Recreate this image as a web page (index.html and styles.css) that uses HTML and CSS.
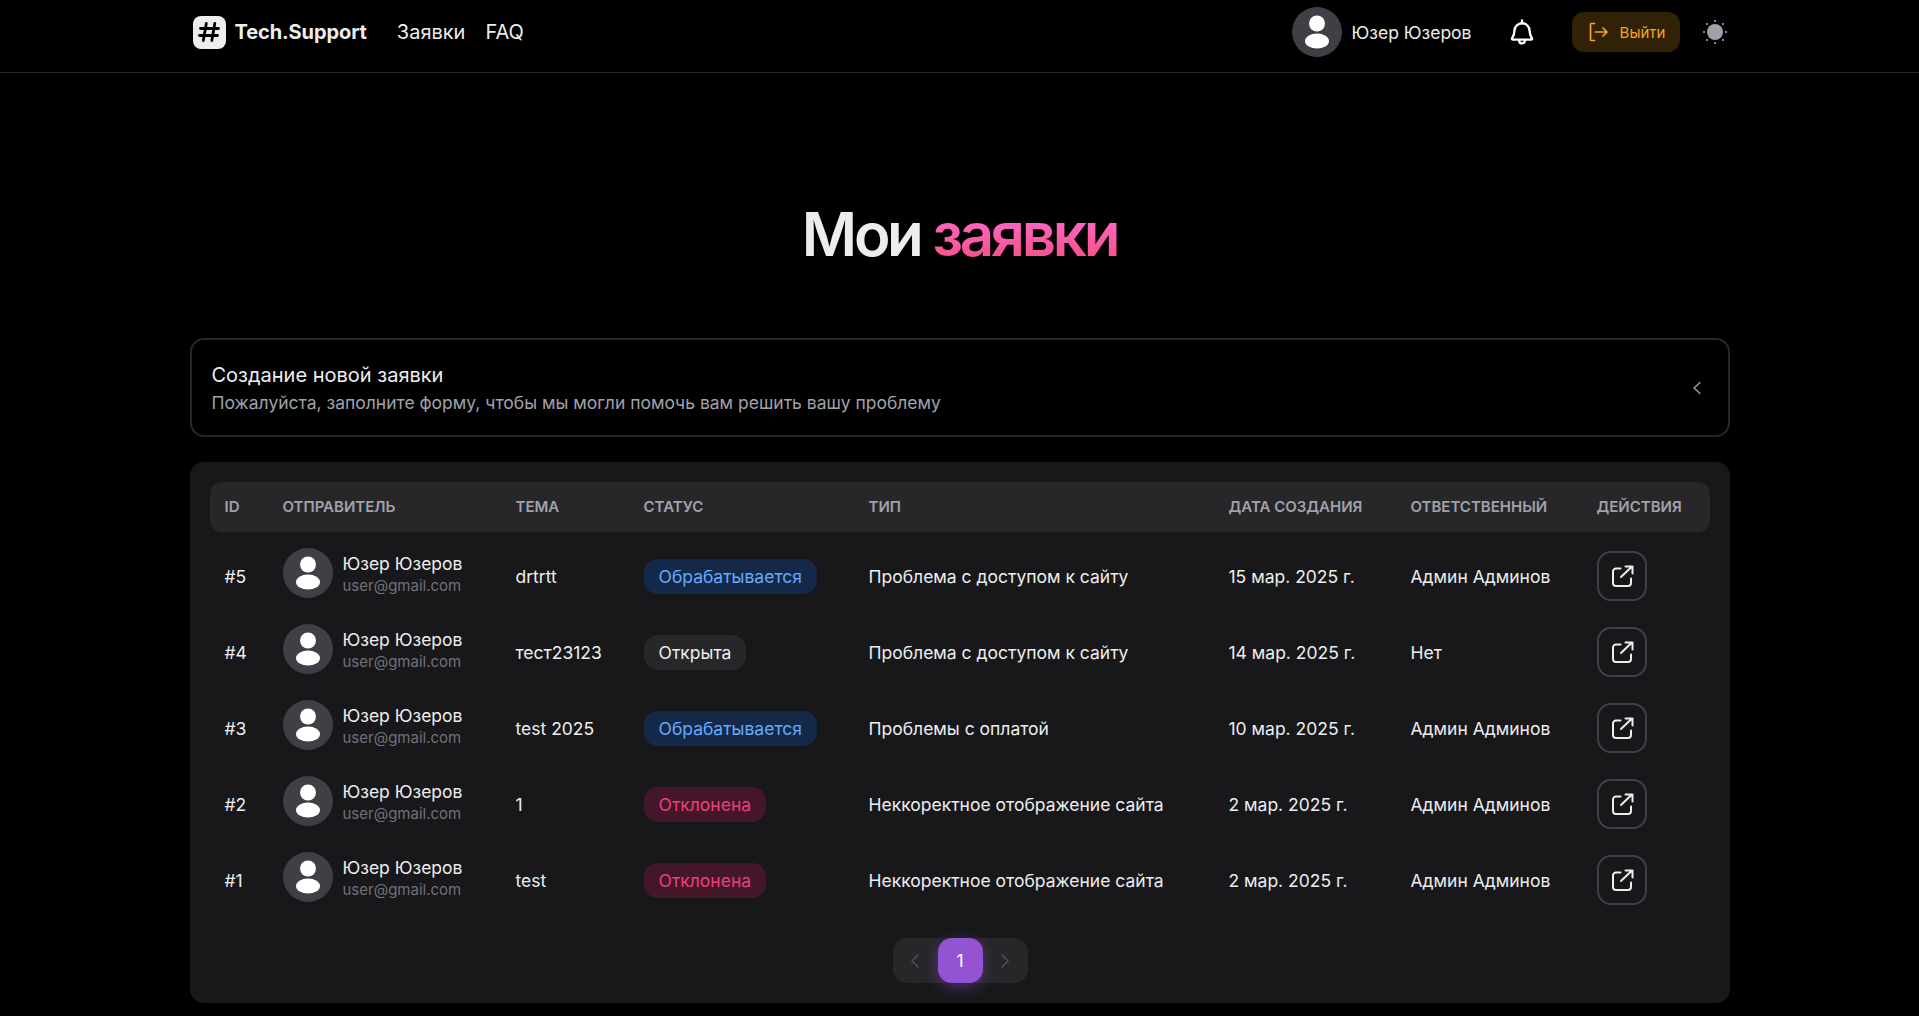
FILE: index.html
```html
<!DOCTYPE html>
<html lang="ru">
<head>
<meta charset="utf-8">
<title>Tech.Support</title>
<link rel="stylesheet" href="styles.css">
</head>
<body>
<svg class="defs" width="0" height="0" aria-hidden="true">
  <symbol id="person" viewBox="0 0 50 50">
    <circle cx="25" cy="16.500" r="8" fill="#fff"/>
    <ellipse cx="25" cy="34" rx="12" ry="7.500" fill="#fff"/>
  </symbol>
  <symbol id="open" viewBox="0 0 24 24">
    <path d="M10.500 4.500H6a3 3 0 0 0-3 3V19a3 3 0 0 0 3 3h12a3 3 0 0 0 3-3v-4.500" fill="none" stroke="currentColor" stroke-width="2" stroke-linecap="round" stroke-linejoin="round"/>
    <path d="M11 13 22 2.500M15.500 2.500H22.500V9.500" fill="none" stroke="currentColor" stroke-width="2" stroke-linecap="round" stroke-linejoin="round"/>
  </symbol>
</svg>
<header class="navbar">
  <div class="nav-inner">
    <div class="brand">
      <span class="logo">
        <svg width="24" height="24" viewBox="0 0 24 24"><path d="M9.300 3.500 6.300 20.500M17.800 3.500l-3 17M3.500 8.500h18M2.500 15.500h18" fill="none" stroke="#000" stroke-width="2.800" stroke-linecap="round"/></svg>
      </span>
      <span class="brand-name">Tech.Support</span>
    </div>
    <nav class="nav-links"><a>Заявки</a><a>FAQ</a></nav>
    <div class="nav-right">
      <div class="nav-user">
        <span class="avatar"><svg width="50" height="50"><use href="#person"/></svg></span>
        <span>Юзер Юзеров</span>
      </div>
      <svg class="bell" width="28" height="28" viewBox="0 0 24 24" fill="none" stroke="#fff" stroke-width="2" stroke-linecap="round" stroke-linejoin="round"><path d="M12 4.500a6.500 6.500 0 0 0-6.500 6.500c0 3.500-1 5-2 6.500-.3.500 0 1 .6 1h15.800c.6 0 .9-.5.6-1-1-1.500-2-3-2-6.500A6.500 6.500 0 0 0 12 4.500Z"/><path d="M12 2v2.500M9.500 19c0 1.600 1.100 2.800 2.500 2.800s2.500-1.200 2.500-2.800"/></svg>
      <button class="logout">
        <svg width="22" height="22" viewBox="0 0 22 22" fill="none" stroke="currentColor" stroke-width="1.700" stroke-linecap="round" stroke-linejoin="round"><path d="M7.500 2.500H4.500a1 1 0 0 0-1 1v15a1 1 0 0 0 1 1h3M8.500 11h11.500M16 7l4 4-4 4"/></svg>
        <span>Выйти</span>
      </button>
      <svg class="sun" width="26" height="26" viewBox="0 0 26 26"><circle cx="13" cy="13" r="8" fill="#a1a1aa"/><g fill="#a1a1aa"><circle cx="13" cy="2" r="1.100"/><circle cx="13" cy="24" r="1.100"/><circle cx="2" cy="13" r="1.100"/><circle cx="24" cy="13" r="1.100"/><circle cx="5" cy="5" r="1.100"/><circle cx="21" cy="5" r="1.100"/><circle cx="5" cy="21" r="1.100"/><circle cx="21" cy="21" r="1.100"/></g></svg>
    </div>
  </div>
</header>
<main class="page">
  <h1 class="title">Мои <span class="accent">заявки</span></h1>
  <section class="create">
    <div>
      <div class="create-title">Создание новой заявки</div>
      <div class="create-sub">Пожалуйста, заполните форму, чтобы мы могли помочь вам решить вашу проблему</div>
    </div>
    <svg class="create-chevron" width="12" height="16" viewBox="0 0 12 16" fill="none" stroke="#a1a1aa" stroke-width="1.400" stroke-linecap="round" stroke-linejoin="round"><path d="M9 2.500 3 8l6 5.500"/></svg>
  </section>
  <section class="panel">
    <table class="tickets">
      <colgroup>
        <col class="c-id"><col class="c-from"><col class="c-topic"><col class="c-status"><col class="c-type"><col class="c-date"><col class="c-resp"><col class="c-act">
      </colgroup>
      <thead>
        <tr><th>ID</th><th>Отправитель</th><th>Тема</th><th>Статус</th><th>Тип</th><th>Дата создания</th><th>Ответственный</th><th>Действия</th></tr>
      </thead>
      <tbody>
        <tr>
          <td>#5</td>
          <td><div class="sender"><span class="avatar"><svg width="50" height="50"><use href="#person"/></svg></span><div><div class="s-name">Юзер Юзеров</div><div class="s-mail">user@gmail.com</div></div></div></td>
          <td>drtrtt</td>
          <td><span class="chip chip-blue">Обрабатывается</span></td>
          <td>Проблема с доступом к сайту</td>
          <td>15 мар. 2025 г.</td>
          <td>Админ Админов</td>
          <td><span class="act"><svg width="24" height="24"><use href="#open"/></svg></span></td>
        </tr>
        <tr>
          <td>#4</td>
          <td><div class="sender"><span class="avatar"><svg width="50" height="50"><use href="#person"/></svg></span><div><div class="s-name">Юзер Юзеров</div><div class="s-mail">user@gmail.com</div></div></div></td>
          <td>тест23123</td>
          <td><span class="chip chip-gray">Открыта</span></td>
          <td>Проблема с доступом к сайту</td>
          <td>14 мар. 2025 г.</td>
          <td>Нет</td>
          <td><span class="act"><svg width="24" height="24"><use href="#open"/></svg></span></td>
        </tr>
        <tr>
          <td>#3</td>
          <td><div class="sender"><span class="avatar"><svg width="50" height="50"><use href="#person"/></svg></span><div><div class="s-name">Юзер Юзеров</div><div class="s-mail">user@gmail.com</div></div></div></td>
          <td>test 2025</td>
          <td><span class="chip chip-blue">Обрабатывается</span></td>
          <td>Проблемы с оплатой</td>
          <td>10 мар. 2025 г.</td>
          <td>Админ Админов</td>
          <td><span class="act"><svg width="24" height="24"><use href="#open"/></svg></span></td>
        </tr>
        <tr>
          <td>#2</td>
          <td><div class="sender"><span class="avatar"><svg width="50" height="50"><use href="#person"/></svg></span><div><div class="s-name">Юзер Юзеров</div><div class="s-mail">user@gmail.com</div></div></div></td>
          <td>1</td>
          <td><span class="chip chip-red">Отклонена</span></td>
          <td>Неккоректное отображение сайта</td>
          <td>2 мар. 2025 г.</td>
          <td>Админ Админов</td>
          <td><span class="act"><svg width="24" height="24"><use href="#open"/></svg></span></td>
        </tr>
        <tr>
          <td>#1</td>
          <td><div class="sender"><span class="avatar"><svg width="50" height="50"><use href="#person"/></svg></span><div><div class="s-name">Юзер Юзеров</div><div class="s-mail">user@gmail.com</div></div></div></td>
          <td>test</td>
          <td><span class="chip chip-red">Отклонена</span></td>
          <td>Неккоректное отображение сайта</td>
          <td>2 мар. 2025 г.</td>
          <td>Админ Админов</td>
          <td><span class="act"><svg width="24" height="24"><use href="#open"/></svg></span></td>
        </tr>
      </tbody>
    </table>
    <div class="pager">
      <div class="pager-track">
        <span class="pager-arrow"><svg width="14" height="16" viewBox="0 0 14 16" fill="none" stroke="#52525b" stroke-width="1.400" stroke-linecap="round" stroke-linejoin="round"><path d="M10 2 4 8l6 6"/></svg></span>
        <span class="pager-page">1</span>
        <span class="pager-arrow"><svg width="14" height="16" viewBox="0 0 14 16" fill="none" stroke="#52525b" stroke-width="1.400" stroke-linecap="round" stroke-linejoin="round"><path d="m4 2 6 6-6 6"/></svg></span>
      </div>
    </div>
  </section>
</main>
</body>
</html>
```

FILE: styles.css
```css
* { box-sizing: border-box; }
html, body { height: 100%; }
body {
  margin: 0;
  background: #000;
  color: #ecedee;
  font-family: Inter, "Noto Sans", sans-serif;
  overflow: hidden;
}
.defs { position: absolute; }
.navbar { height: 73px; border-bottom: 1px solid #27272a; }
.nav-inner {
  width: 1540px;
  height: 72px;
  margin: 0 auto;
  padding: 0 2px 8px 3px;
  display: flex;
  align-items: center;
}
.brand { display: flex; align-items: center; gap: 9px; }
.logo {
  width: 33px;
  height: 33px;
  border-radius: 8px;
  background: #ecedee;
  display: flex;
  align-items: center;
  justify-content: center;
}
.brand-name { font-size: 20px; font-weight: 700; letter-spacing: -0.100px; }
.nav-links { display: flex; gap: 20px; margin-left: 30px; font-size: 20px; }
.nav-right { margin-left: auto; display: flex; align-items: center; }
.nav-user { display: flex; align-items: center; gap: 10px; font-size: 17.500px; }
.avatar {
  width: 50px;
  height: 50px;
  border-radius: 50%;
  background: #3f3f46;
  display: block;
  flex: none;
}
.avatar svg { display: block; }
.bell { margin-left: 36px; }
.logout {
  margin-left: 36px;
  width: 108px;
  height: 40px;
  border: 0;
  padding: 0 0 0 1px;
  border-radius: 12px;
  background: #312107;
  color: #f5a524;
  font: 15px Inter, sans-serif;
  display: flex;
  align-items: center;
  justify-content: center;
  gap: 11px;
}
.sun { margin-left: 22px; }
.page { width: 1540px; margin: 0 auto; }
.title {
  margin: 0;
  padding-top: 121px;
  height: 265px;
  text-align: center;
  font-size: 60px;
  line-height: 80px;
  font-weight: 600;
  letter-spacing: -3.300px;
}
.accent {
  background: linear-gradient(180deg, #ff72e1, #f54c7a);
  -webkit-background-clip: text;
  background-clip: text;
  color: transparent;
}
.create {
  height: 99px;
  border: 2px solid #27272a;
  border-radius: 14px;
  padding: 3px 25px 0 20px;
  display: flex;
  align-items: center;
  justify-content: space-between;
}
.create-chevron { margin-top: -2px; }
.create-title { font-size: 20px; line-height: 28px; }
.create-sub { font-size: 17.500px; line-height: 28px; color: #a1a1aa; }
.panel {
  margin-top: 25px;
  height: 541px;
  background: #18181b;
  border-radius: 14px;
  padding: 20px;
}
.tickets { width: 1500px; table-layout: fixed; border-collapse: separate; border-spacing: 0; }
.c-id { width: 58px; }
.c-from { width: 233px; }
.c-topic { width: 128px; }
.c-status { width: 225px; }
.c-type { width: 360px; }
.c-date { width: 182px; }
.c-resp { width: 186px; }
.c-act { width: 128px; }
.tickets th {
  height: 50px;
  padding: 0 0 2px 15px;
  background: #27272a;
  color: #a1a1aa;
  font-size: 15px;
  font-weight: 600;
  text-align: left;
  text-transform: uppercase;
  white-space: nowrap;
}
.tickets th:first-child { border-radius: 12px 0 0 12px; }
.tickets th:last-child { border-radius: 0 12px 12px 0; }
.tickets td {
  height: 76px;
  padding: 0 0 0 15px;
  font-size: 17.500px;
  font-weight: 400;
  color: #ecedee;
  white-space: nowrap;
}
.tickets tbody tr:first-child td { height: 82px; padding-top: 6px; }
.sender { display: flex; align-items: center; gap: 10px; margin-bottom: 6px; }
.s-name { font-size: 17.500px; line-height: 23px; padding-top: 2px; }
.s-mail { font-size: 15px; line-height: 22px; color: #71717a; }
.chip {
  display: inline-block;
  height: 35px;
  padding: 0 15px;
  border-radius: 14px;
  font-size: 17.500px;
  line-height: 35px;
}
.chip-blue { background: #14294a; color: #66aaf9; }
.chip-gray { background: #27272a; color: #ecedee; }
.chip-red { background: #431729; color: #ed3f7c; }
.act {
  width: 50px;
  height: 50px;
  border: 2px solid #3f3f46;
  border-radius: 14px;
  display: flex;
  align-items: center;
  justify-content: center;
  color: #ecedee;
}
.act svg { display: block; }
.pager { display: flex; justify-content: center; margin-top: 20px; padding-left: 1px; }
.pager-track {
  width: 135px;
  height: 45px;
  border-radius: 14px;
  background: #27272a;
  display: flex;
  align-items: center;
  justify-content: space-between;
}
.pager-arrow { width: 45px; display: flex; justify-content: center; }
.pager-page {
  width: 45px;
  height: 45px;
  border-radius: 14px;
  background: #9353d3;
  box-shadow: 0 4px 14px rgba(147, 83, 211, .4);
  color: #fff;
  font-size: 17.500px;
  display: flex;
  align-items: center;
  justify-content: center;
}
```
